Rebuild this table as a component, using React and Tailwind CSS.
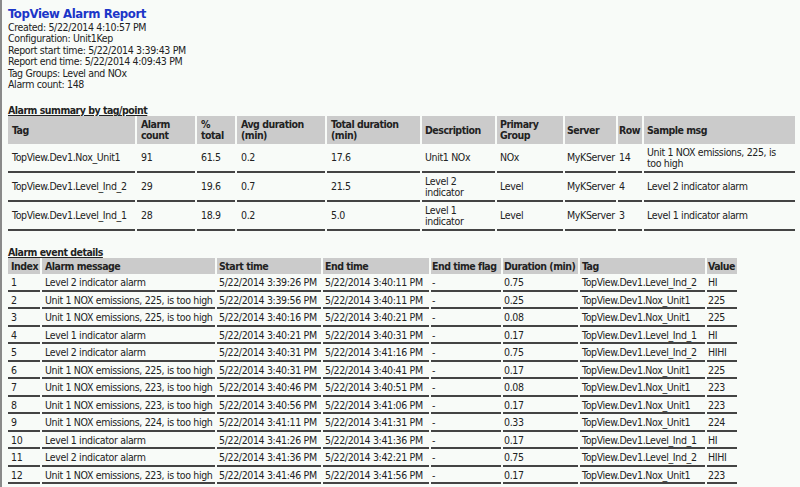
import React from "react";

const summaryCols = [
  { label: ["Tag"], w: "w-[127px]", p: "px-[4px]" },
  { label: ["Alarm", "count"], w: "w-[58px]", p: "px-[4px]" },
  { label: ["%", "total"], w: "w-[38px]", p: "px-[4px]" },
  { label: ["Avg duration", "(min)"], w: "w-[88px]", p: "px-[4px]" },
  { label: ["Total duration", "(min)"], w: "w-[93px]", p: "px-[4px]" },
  { label: ["Description"], w: "w-[73px]", p: "px-[3px]" },
  { label: ["Primary", "Group"], w: "w-[66px]", p: "px-[3px]" },
  { label: ["Server"], w: "w-[51px]", p: "px-[2px]" },
  { label: ["Row"], w: "w-[24px]", p: "px-[1px]" },
  { label: ["Sample msg"], w: "w-[151px]", p: "px-[3px]" },
];

const summaryRows = [
  ["TopView.Dev1.Nox_Unit1", "91", "61.5", "0.2", "17.6", ["Unit1 NOx"], "NOx", "MyKServer", "14", ["Unit 1 NOX emissions, 225, is", "too high"]],
  ["TopView.Dev1.Level_Ind_2", "29", "19.6", "0.7", "21.5", ["Level 2", "indicator"], "Level", "MyKServer", "4", ["Level 2 indicator alarm"]],
  ["TopView.Dev1.Level_Ind_1", "28", "18.9", "0.2", "5.0", ["Level 1", "indicator"], "Level", "MyKServer", "3", ["Level 1 indicator alarm"]],
];

const eventCols = [
  { label: "Index", w: "w-[32px]", p: "px-[3px]" },
  { label: "Alarm message", w: "w-[173px]", p: "px-[3px]" },
  { label: "Start time", w: "w-[104px]", p: "px-[2px]" },
  { label: "End time", w: "w-[106px]", p: "px-[2px]" },
  { label: "End time flag", w: "w-[70px]", p: "px-[1px]" },
  { label: "Duration (min)", w: "w-[75px]", p: "px-[1px]" },
  { label: "Tag", w: "w-[125px]", p: "px-[2px]" },
  { label: "Value", w: "w-[30px]", p: "px-[1px]" },
];

const events = [
  ["1", "Level 2 indicator alarm", "5/22/2014 3:39:26 PM", "5/22/2014 3:40:11 PM", "0.75", "TopView.Dev1.Level_Ind_2", "HI"],
  ["2", "Unit 1 NOX emissions, 225, is too high", "5/22/2014 3:39:56 PM", "5/22/2014 3:40:11 PM", "0.25", "TopView.Dev1.Nox_Unit1", "225"],
  ["3", "Unit 1 NOX emissions, 225, is too high", "5/22/2014 3:40:16 PM", "5/22/2014 3:40:21 PM", "0.08", "TopView.Dev1.Nox_Unit1", "225"],
  ["4", "Level 1 indicator alarm", "5/22/2014 3:40:21 PM", "5/22/2014 3:40:31 PM", "0.17", "TopView.Dev1.Level_Ind_1", "HI"],
  ["5", "Level 2 indicator alarm", "5/22/2014 3:40:31 PM", "5/22/2014 3:41:16 PM", "0.75", "TopView.Dev1.Level_Ind_2", "HIHI"],
  ["6", "Unit 1 NOX emissions, 225, is too high", "5/22/2014 3:40:31 PM", "5/22/2014 3:40:41 PM", "0.17", "TopView.Dev1.Nox_Unit1", "225"],
  ["7", "Unit 1 NOX emissions, 223, is too high", "5/22/2014 3:40:46 PM", "5/22/2014 3:40:51 PM", "0.08", "TopView.Dev1.Nox_Unit1", "223"],
  ["8", "Unit 1 NOX emissions, 223, is too high", "5/22/2014 3:40:56 PM", "5/22/2014 3:41:06 PM", "0.17", "TopView.Dev1.Nox_Unit1", "223"],
  ["9", "Unit 1 NOX emissions, 224, is too high", "5/22/2014 3:41:11 PM", "5/22/2014 3:41:31 PM", "0.33", "TopView.Dev1.Nox_Unit1", "224"],
  ["10", "Level 1 indicator alarm", "5/22/2014 3:41:26 PM", "5/22/2014 3:41:36 PM", "0.17", "TopView.Dev1.Level_Ind_1", "HI"],
  ["11", "Level 2 indicator alarm", "5/22/2014 3:41:36 PM", "5/22/2014 3:42:21 PM", "0.75", "TopView.Dev1.Level_Ind_2", "HIHI"],
  ["12", "Unit 1 NOX emissions, 223, is too high", "5/22/2014 3:41:46 PM", "5/22/2014 3:41:56 PM", "0.17", "TopView.Dev1.Nox_Unit1", "223"],
];

function Lines({ parts }) {
  return parts.map((p, i) => <div key={i}>{p}</div>);
}

export default function App() {
  return (
    <div
      className="min-h-screen bg-[#f8fbf8] border-l-2 border-[#8a8a8a] pl-[6px] pt-[6px] text-[#222] text-[10.5px] tracking-[-0.35px] overflow-hidden"
      style={{ fontFamily: '"DejaVu Sans Condensed", "DejaVu Sans", sans-serif' }}
    >
      <h1 className="text-[13px] leading-[16px] font-bold tracking-[-0.4px] text-[#1c36c8]">TopView Alarm Report</h1>
      <div className="leading-[11.4px]">
        <div>Created: 5/22/2014 4:10:57 PM</div>
        <div>Configuration: Unit1Kep</div>
        <div>Report start time: 5/22/2014 3:39:43 PM</div>
        <div>Report end time: 5/22/2014 4:09:43 PM</div>
        <div>Tag Groups: Level and NOx</div>
        <div>Alarm count: 148</div>
      </div>

      <div className="mt-[14px] leading-[12px] font-bold tracking-[-0.5px] underline">Alarm summary by tag/point</div>
      <table className="-ml-[2px] w-[791px] table-fixed border-separate border-spacing-x-[2px] border-spacing-y-0 leading-[11px]">
        <thead>
          <tr>
            {summaryCols.map((c, i) => (
              <th key={i} className={`${c.w} ${c.p} h-[28px] bg-[#cbcbcb] text-left font-bold tracking-[-0.5px] align-middle overflow-hidden whitespace-nowrap`}>
                <Lines parts={c.label} />
              </th>
            ))}
          </tr>
        </thead>
        <tbody>
          {summaryRows.map((r, i) => (
            <tr key={i}>
              {r.map((cell, j) => (
                <td key={j} className={`${summaryCols[j].p} h-[29px] border-b-2 border-[#444] align-middle whitespace-nowrap overflow-hidden`}>
                  {Array.isArray(cell) ? <Lines parts={cell} /> : cell}
                </td>
              ))}
            </tr>
          ))}
        </tbody>
      </table>

      <div className="mt-[15px] leading-[12px] font-bold tracking-[-0.5px] underline">Alarm event details</div>
      <table className="-ml-[2px] w-[733px] table-fixed border-separate border-spacing-x-[2px] border-spacing-y-0 leading-[12px]">
        <thead>
          <tr>
            {eventCols.map((c, i) => (
              <th key={i} className={`${c.w} ${c.p} h-[16px] bg-[#cbcbcb] text-left font-bold tracking-[-0.5px] whitespace-nowrap overflow-hidden`}>
                {c.label}
              </th>
            ))}
          </tr>
        </thead>
        <tbody>
          {events.map((e, i) => (
            <tr key={i}>
              {[e[0], e[1], e[2], e[3], "-", e[4], e[5], e[6]].map((cell, j) => (
                <td key={j} className={`${eventCols[j].p} h-[17.5px] border-b-2 border-[#444] whitespace-nowrap overflow-hidden`}>
                  {cell}
                </td>
              ))}
            </tr>
          ))}
        </tbody>
      </table>
    </div>
  );
}
